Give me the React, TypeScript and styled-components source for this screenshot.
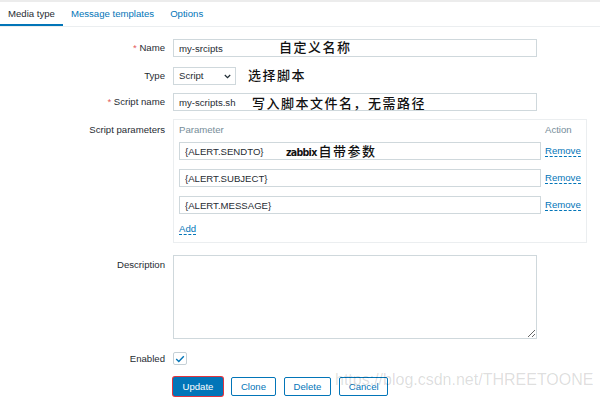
import React from "react";
import styled, { createGlobalStyle } from "styled-components";

const GlobalStyle = createGlobalStyle`
  html, body { margin: 0; padding: 0; background: #ffffff; }
  body {
    font-family: "Liberation Sans", Arial, sans-serif;
    font-size: 9.6px;
    color: #1f2c33;
  }
  #root { width: 600px; height: 399px; overflow: hidden; }
`;

const Page = styled.div`
  position: relative;
  width: 600px;
  height: 399px;
  box-sizing: border-box;
  border-top: 2px solid #ececec;
  background: #fff;
`;

const TabBar = styled.div`
  display: flex;
  border-bottom: 1px solid #ebeef0;
`;

const Tab = styled.div<{ $active?: boolean }>`
  height: 22px;
  line-height: 24px;
  padding: 0 8px;
  color: ${(p) => (p.$active ? "#1f2c33" : "#0275b8")};
  border-bottom: 2px solid ${(p) => (p.$active ? "#0275b8" : "transparent")};
`;

const Form = styled.div`
  display: flex;
  flex-direction: column;
  padding-top: 12px;
`;

const Row = styled.div<{ $gap: number }>`
  display: grid;
  grid-template-columns: 165px 1fr;
  column-gap: 8px;
  margin-bottom: ${(p) => p.$gap}px;
`;

const Label = styled.div<{ $pt?: number; $lh?: number }>`
  text-align: right;
  line-height: ${(p) => p.$lh ?? 18}px;
  padding-top: ${(p) => p.$pt ?? 0}px;
  white-space: nowrap;
`;

const Req = styled.span`
  color: #e45959;
`;

const Field = styled.div`
  position: relative;
  display: flex;
  align-items: flex-start;
`;

const TextInput = styled.input<{ $w: number }>`
  width: ${(p) => p.$w}px;
  height: 18px;
  box-sizing: border-box;
  border: 1px solid #cfd8dc;
  padding: 0 5px;
  margin: 0;
  font: inherit;
  color: #1f2c33;
  background: #fff;
  outline: none;
`;

const SelectBox = styled.div`
  width: 63px;
  height: 18px;
  box-sizing: border-box;
  border: 1px solid #cfd8dc;
  padding: 0 4px 0 5px;
  display: flex;
  align-items: center;
  justify-content: space-between;
  line-height: 16px;
`;

const Annotation = styled.span<{ $left: number; $top: number }>`
  position: absolute;
  left: ${(p) => p.$left}px;
  top: ${(p) => p.$top}px;
  font-family: "Noto Sans CJK SC", "Liberation Sans", sans-serif;
  font-size: 13px;
  font-weight: 500;
  line-height: 15px;
  letter-spacing: 1.5px;
  color: #111;
  white-space: nowrap;
  pointer-events: none;
`;

const Brand = styled.span`
  font-family: "DejaVu Sans Condensed", "Liberation Sans Narrow", "DejaVu Sans", sans-serif;
  font-stretch: condensed;
  font-weight: 700;
  font-size: 10.5px;
  letter-spacing: -0.7px;
  margin-right: 2px;
`;

const ParamBox = styled.div`
  width: 414px;
  box-sizing: border-box;
  border: 1px solid #ebeef0;
  padding: 4px 4px 7px 5px;
  display: flex;
  flex-direction: column;
  gap: 9px;
`;

const ParamRow = styled.div<{ $header?: boolean }>`
  position: relative;
  display: grid;
  grid-template-columns: 362px auto;
  column-gap: 4px;
  align-items: center;
  margin-bottom: ${(p) => (p.$header ? -3 : 0)}px;
`;

const HeadCell = styled.div`
  color: #768d99;
  line-height: 12px;
`;

const DashLink = styled.a`
  justify-self: start;
  color: #0275b8;
  text-decoration: none;
  line-height: 11px;
  border-bottom: 1px dashed #0275b8;
  cursor: pointer;
`;

const TextArea = styled.textarea`
  width: 364px;
  height: 84px;
  box-sizing: border-box;
  border: 1px solid #cfd8dc;
  margin: 0;
  padding: 3px 5px;
  font: inherit;
  outline: none;
  resize: both;
`;

const CheckBox = styled.div`
  width: 14px;
  height: 13px;
  box-sizing: border-box;
  border: 1px solid #c5d0d6;
  border-radius: 2px;
  display: flex;
  align-items: center;
  justify-content: center;
  background: #fff;
`;

const ButtonBar = styled.div`
  display: flex;
  gap: 8.5px;
`;

const Button = styled.button<{ $primary?: boolean; $marked?: boolean }>`
  height: 19px;
  box-sizing: border-box;
  padding: 0 8.5px;
  margin: 0;
  font: inherit;
  line-height: 17px;
  border-radius: 2px;
  border: 1px solid #0275b8;
  background: ${(p) => (p.$primary ? "#0275b8" : "#ffffff")};
  color: ${(p) => (p.$primary ? "#ffffff" : "#0275b8")};
  box-shadow: ${(p) => (p.$marked ? "0 0 0 1px #e2353f" : "none")};
  cursor: pointer;
`;

const Watermark = styled.div`
  position: absolute;
  left: 335px;
  top: 370px;
  font-family: "Liberation Sans", Arial, sans-serif;
  font-size: 16px;
  line-height: 16px;
  color: rgba(0, 0, 0, 0.14);
  white-space: nowrap;
  pointer-events: none;
`;

const params = ["{ALERT.SENDTO}", "{ALERT.SUBJECT}", "{ALERT.MESSAGE}"];

export default function App() {
  return (
    <>
      <GlobalStyle />
      <Page>
        <TabBar>
          <Tab $active>Media type</Tab>
          <Tab>Message templates</Tab>
          <Tab>Options</Tab>
        </TabBar>
        <Form>
          <Row $gap={10}>
            <Label>
              <Req>*</Req> Name
            </Label>
            <Field>
              <TextInput $w={364} defaultValue="my-srcipts" />
              <Annotation $left={106} $top={0}>自定义名称</Annotation>
            </Field>
          </Row>
          <Row $gap={8}>
            <Label>Type</Label>
            <Field>
              <SelectBox>
                <span>Script</span>
                <svg width="7" height="5" viewBox="0 0 7 5">
                  <path d="M0.8 1 L3.5 3.7 L6.2 1" fill="none" stroke="#1f2c33" strokeWidth="1.2" />
                </svg>
              </SelectBox>
              <Annotation $left={75} $top={0}>选择脚本</Annotation>
            </Field>
          </Row>
          <Row $gap={8}>
            <Label>
              <Req>*</Req> Script name
            </Label>
            <Field>
              <TextInput $w={364} defaultValue="my-scripts.sh" />
              <Annotation $left={79} $top={2}>写入脚本文件名，无需路径</Annotation>
            </Field>
          </Row>
          <Row $gap={12}>
            <Label $pt={2}>Script parameters</Label>
            <Field>
              <ParamBox>
                <ParamRow $header>
                  <HeadCell>Parameter</HeadCell>
                  <HeadCell>Action</HeadCell>
                </ParamRow>
                {params.map((p, i) => (
                  <ParamRow key={p}>
                    <TextInput $w={362} defaultValue={p} />
                    <DashLink>Remove</DashLink>
                    {i === 0 && (
                      <Annotation $left={107} $top={1}>
                        <Brand>zabbix</Brand>自带参数
                      </Annotation>
                    )}
                  </ParamRow>
                ))}
                <ParamRow>
                  <DashLink>Add</DashLink>
                </ParamRow>
              </ParamBox>
            </Field>
          </Row>
          <Row $gap={13}>
            <Label $pt={1}>Description</Label>
            <Field>
              <TextArea />
            </Field>
          </Row>
          <Row $gap={12}>
            <Label $lh={13}>Enabled</Label>
            <Field>
              <CheckBox>
                <svg width="10" height="8" viewBox="0 0 10 8">
                  <path d="M1.2 4 L3.8 6.4 L8.8 1.3" fill="none" stroke="#0275b8" strokeWidth="1.4" />
                </svg>
              </CheckBox>
            </Field>
          </Row>
          <Row $gap={0}>
            <div />
            <ButtonBar>
              <Button $primary $marked>Update</Button>
              <Button>Clone</Button>
              <Button>Delete</Button>
              <Button>Cancel</Button>
            </ButtonBar>
          </Row>
        </Form>
        <Watermark>https://blog.csdn.net/THREETOONE</Watermark>
      </Page>
    </>
  );
}
